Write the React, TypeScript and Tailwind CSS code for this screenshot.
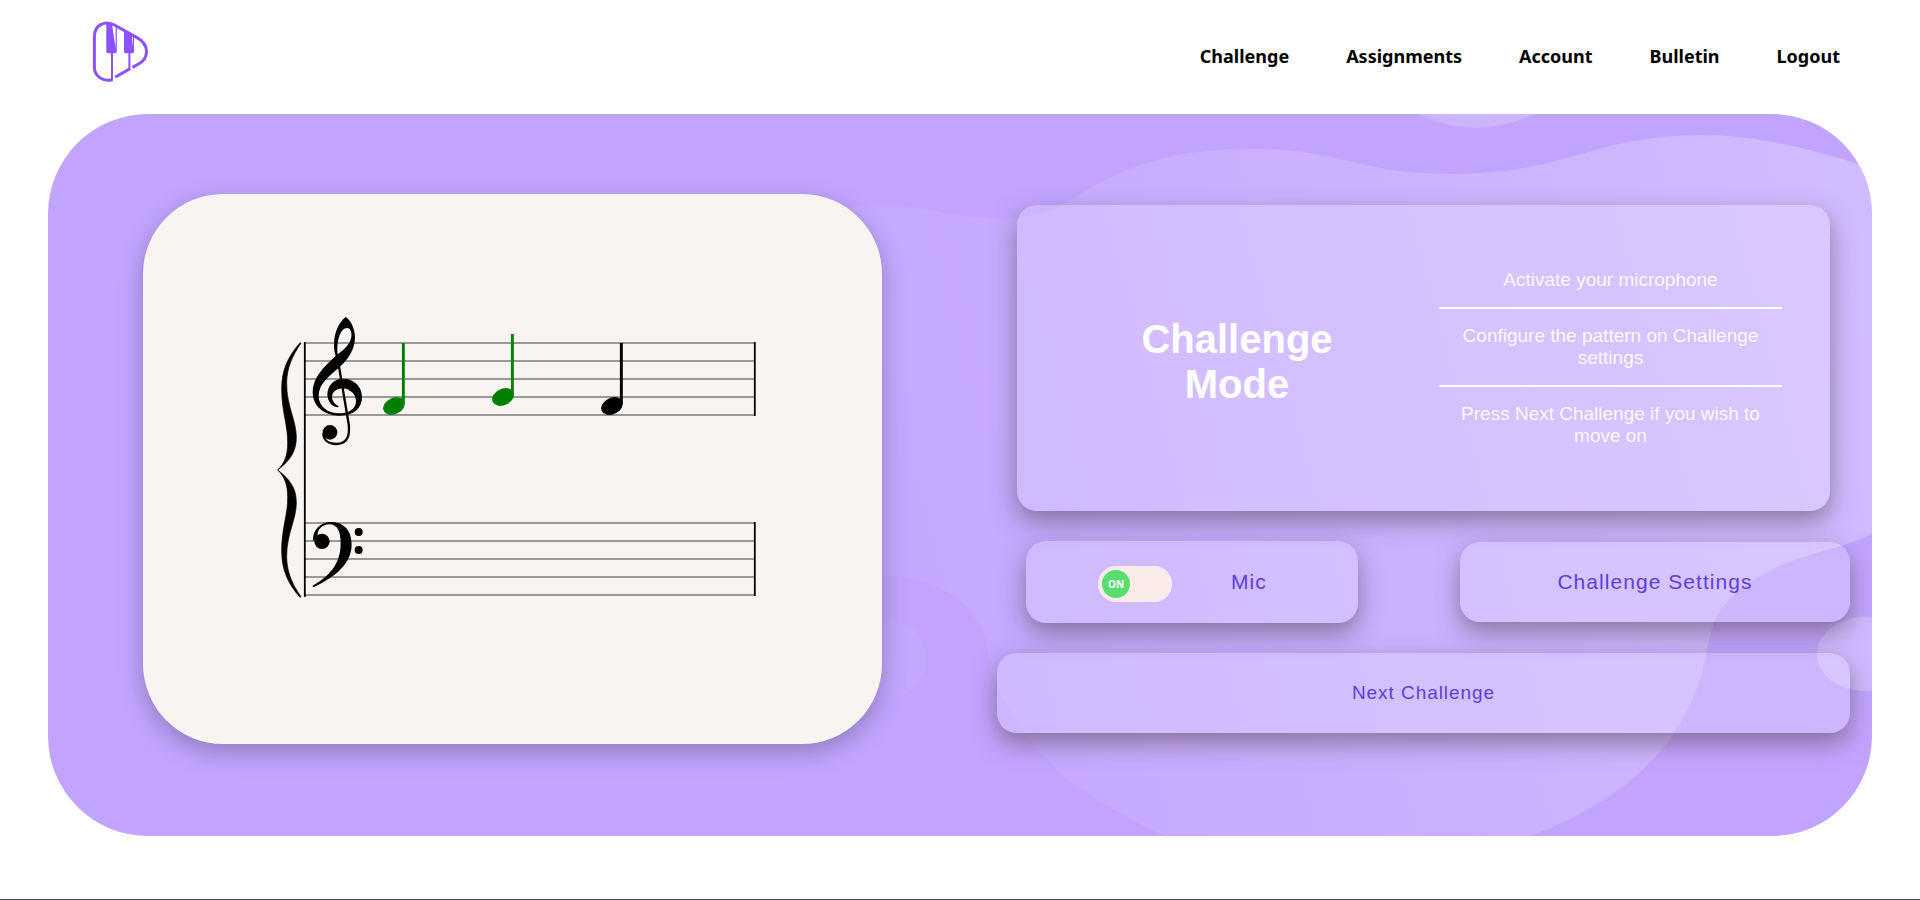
import React, { useState } from "react";

const NAV_ITEMS = ["Challenge", "Assignments", "Account", "Bulletin", "Logout"];

const STEPS = [
  "Activate your microphone",
  "Configure the pattern on Challenge settings",
  "Press Next Challenge if you wish to move on",
];

const GLASS =
  "rounded-[20px] bg-white/20 shadow-[0_10px_24px_rgba(74,58,60,0.5)]";

function Logo() {
  return (
    <svg viewBox="0 0 57 62" className="h-[62px] w-[57px]" aria-hidden="true">
      <g fill="none" stroke="#8c52ff" strokeWidth="3">
        <path d="M20.6 58.8C10.5 61 2.4 55 2.4 46V15.5C2.4 4 12.5 -1 22.5 4L45 16.6C57.4 23.5 57.4 37 46.5 43L40.5 46.4" />
        <path d="M23.3 56.2L38 47.6" />
      </g>
      <path d="M20 32V59.5M37.4 32V48.5" fill="none" stroke="#8c52ff" strokeWidth="2" />
      <path d="M14.3 2.5H19.9L23.6 27V4.5H24.8V31L23.6 32.2H15.5L14.3 31Z" fill="#8c52ff" />
      <path d="M32 9.5L39.8 14L41 26V15H42V31L40.8 32.2H33.2L32 31Z" fill="#8c52ff" />
    </svg>
  );
}

function Backdrop() {
  return (
    <svg
      viewBox="48 114 1824 722"
      preserveAspectRatio="xMaxYMin slice"
      className="absolute inset-0 h-full w-full"
      aria-hidden="true"
    >
      <defs>
        <linearGradient id="wave" gradientUnits="userSpaceOnUse" x1="850" y1="600" x2="1872" y2="330">
          <stop offset="0" stopColor="#fff" stopOpacity="0.02" />
          <stop offset="1" stopColor="#fff" stopOpacity="0.25" />
        </linearGradient>
      </defs>
      <g fill="url(#wave)">
        <path d="M800 215C850 205 897 203 934 211C975 219 1012 223 1046 212C1085 200 1118 149 1252 149C1340 149 1360 174 1448 174C1570 174 1590 135 1705 135C1765 136 1815 150 1880 171V530C1845 549 1805 553 1775 568C1708 601 1713 630 1705 660C1688 737 1635 796 1531 836V840H1173C1105 808 1060 780 1036 747C970 664 1000 650 976 620C958 590 920 575 880 576C780 576 760 230 800 215Z" />
        <circle cx="1476" cy="1" r="127" />
        <circle cx="885" cy="659" r="41" />
        <ellipse cx="1864" cy="654" rx="47" ry="37" />
      </g>
    </svg>
  );
}

function Brace() {
  return (
    <path
      d="M120 128C86 168 65 206 65 268C65 336 84 376 83 430C83 465 74 490 53 510C90 482 109 455 109 412C109 360 80 320 80 250C80 204 98 165 123 130Z"
      stroke="#000"
      strokeWidth="2"
      strokeLinejoin="round"
    />
  );
}

function Note({ x, y, color }: { x: number; y: number; color: string }) {
  return (
    <g fill={color}>
      <ellipse cx={x} cy={y} rx="11.4" ry="8.2" transform={`rotate(-26 ${x} ${y})`} />
      <rect x={x + 7.9} y={y - 63} width="2.9" height="61" />
    </g>
  );
}

function GrandStaff() {
  const staves = [343, 523];
  return (
    <svg viewBox="263 319 500 300" className="w-[500px] max-w-full overflow-visible" role="img" aria-label="Grand staff">
      {staves.map((top) =>
        [0, 18, 36, 54, 72].map((dy) => (
          <path key={top + dy} d={`M304 ${top + dy}H755`} stroke="#999" strokeWidth="2" />
        ))
      )}
      <path d="M304.8 342V597M754.8 342V416M754.8 522V596" stroke="#000" strokeWidth="1.8" />
      <g transform="translate(260 300) scale(0.33333)">
        <Brace />
        <g transform="translate(0 1020) scale(1 -1)">
          <Brace />
        </g>
        <path
          fillRule="evenodd"
          d="M257 51C236 67 222 98 222 135C222 148 224 158 227 168C186 205 158 236 158 277C158 318 192 347 238 347C282 347 306 324 306 291C306 258 280 236 250 236C220 236 202 258 202 285C204 305 216 320 232 322C237 321 237 318 234 317C222 312 216 300 216 290C217 276 229 265 248 265C272 267 288 284 288 303C288 328 265 340 238 340C200 340 176 317 176 287C176 252 206 230 238 202C266 176 285 148 285 110C284 85 272 60 257 51ZM233 163C229 125 240 84 262 84C272 84 276 98 274 110C270 134 252 148 233 163Z"
        />
        <path d="M237 200L264 360C268 380 268 398 264 410C258 426 246 432 229 432C205 432 190 420 190 400" fill="none" stroke="#000" strokeWidth="7" />
        <circle cx="210" cy="397" r="22" />
        <path d="M159 724C157 690 180 666 214 666C251 666 275 692 275 733C275 790 228 830 162 861C157 862 156 858 160 856C216 824 242 785 242 730C242 696 233 673 208 673C188 673 170 688 173 710Z" />
        <circle cx="186" cy="724" r="23" />
        <circle cx="296" cy="696" r="12" />
        <circle cx="296" cy="750" r="12" />
      </g>
      <Note x={394} y={406} color="#008000" />
      <Note x={503} y={397} color="#008000" />
      <Note x={612} y={406} color="#000" />
    </svg>
  );
}

function MicToggle() {
  const [on, setOn] = useState(true);
  return (
    <label
      className={`flex h-[82px] cursor-pointer items-center gap-[59px] pl-[72px] text-[21px] tracking-wider text-[#5b3fd9] ${GLASS}`}
    >
      <input
        type="checkbox"
        checked={on}
        onChange={() => setOn(!on)}
        className="sr-only"
      />
      <span className={`mt-1 flex h-9 w-[74px] items-center rounded-full bg-[#fbebe9] px-1 ${on ? "justify-start" : "justify-end"}`}>
        <span
          className={`flex h-7 w-7 items-center justify-center rounded-full font-['Open_Sans',sans-serif] text-[10px] font-bold tracking-normal text-white ${on ? "bg-[#57de6e]" : "bg-gray-400"}`}
        >
          {on ? "ON" : "OFF"}
        </span>
      </span>
      Mic
    </label>
  );
}

export default function App() {
  return (
    <div className="bg-white font-['Liberation_Sans',Arial,sans-serif]">
      <header className="flex h-[114px] items-center justify-between pr-20 pl-[92px]">
        <a href="#" aria-label="Home" className="-mt-2.5">
          <Logo />
        </a>
        <nav className="-mt-0.5 flex gap-[57px] font-['Noto_Sans','Open_Sans',sans-serif] text-lg font-bold text-black">
          {NAV_ITEMS.map((item) => (
            <a key={item} href="#">
              {item}
            </a>
          ))}
        </nav>
      </header>

      <main className="relative mx-12 overflow-hidden rounded-[100px] bg-[#c2a4ff]">
        <Backdrop />
        <div className="relative flex items-center gap-[115px] pt-20 pr-[22px] pb-[92px] pl-[95px]">
          <section className="flex h-[550px] flex-[739] items-center justify-center rounded-[80px] bg-[#f8f4f1] shadow-[0_8px_24px_rgba(0,0,0,0.25)]">
            <GrandStaff />
          </section>

          <section className="flex flex-[853] flex-col gap-[30px]">
            <div className={`mx-5 flex h-[306px] items-center justify-between pr-12 pl-[100px] ${GLASS}`}>
              <h1 className="w-60 pt-2 text-center text-[40px] leading-[45px] font-bold text-white">
                Challenge Mode
              </h1>
              <ul className="w-[343px] divide-y-2 divide-white text-center text-[19px] leading-[22px] text-[#faf7fb]">
                {STEPS.map((step) => (
                  <li key={step} className="py-4">
                    {step}
                  </li>
                ))}
              </ul>
            </div>

            <div className="grid grid-cols-[332fr_390fr] items-center gap-[102px] pl-[29px]">
              <MicToggle />
              <button type="button" className={`h-20 cursor-pointer text-[21px] tracking-wider text-[#5b3fd9] ${GLASS}`}>
                Challenge Settings
              </button>
            </div>

            <button type="button" className={`h-20 cursor-pointer text-[19px] tracking-wider text-[#5b3fd9] ${GLASS}`}>
              Next Challenge
            </button>
          </section>
        </div>
      </main>

      <footer className="mt-[63px] border-t border-[#4d4766]" />
    </div>
  );
}
